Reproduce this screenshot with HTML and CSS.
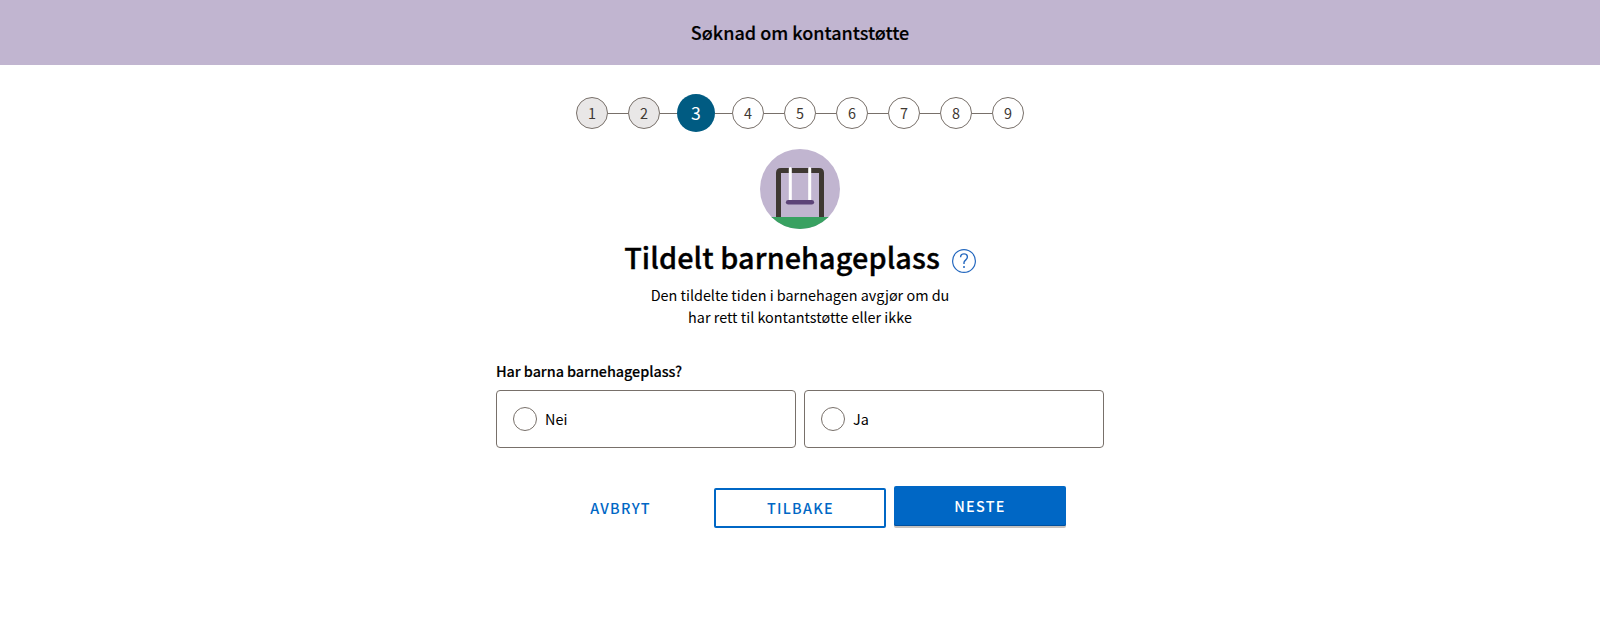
FILE: index.html
```html
<!DOCTYPE html>
<html lang="nb">
<head>
<meta charset="utf-8">
<title>Søknad om kontantstøtte</title>
<link rel="stylesheet" href="styles.css">
</head>
<body>
<header class="banner"><span class="banner-title">Søknad om kontantstøtte</span></header>
<main class="page">
  <ol class="steps">
    <li class="step done">1</li>
    <li class="step done">2</li>
    <li class="step active">3</li>
    <li class="step">4</li>
    <li class="step">5</li>
    <li class="step">6</li>
    <li class="step">7</li>
    <li class="step">8</li>
    <li class="step">9</li>
  </ol>
  <svg class="illustration" width="80" height="80" viewBox="0 0 80 80" aria-hidden="true">
    <clipPath id="disc"><circle cx="40" cy="40" r="40"/></clipPath>
    <circle cx="40" cy="40" r="40" fill="#c1b5d0"/>
    <path d="M18.500 69V24q0-2.500 2.500-2.500h38q2.500 0 2.500 2.500v45" fill="none" stroke="#3e3832" stroke-width="5"/>
    <path d="M30.300 19.500v33M49.700 19.500v33" stroke="#fff" stroke-width="3" stroke-linecap="round"/>
    <path d="M28.200 53.300h23.600" stroke="#5c4378" stroke-width="4.600" stroke-linecap="round"/>
    <rect y="68" width="80" height="12" fill="#38a161" clip-path="url(#disc)"/>
  </svg>
  <div class="heading-row">
    <h1 class="heading">Tildelt barnehageplass</h1>
    <svg class="help" width="24" height="24" viewBox="0 0 24 24" fill="none" stroke="#2468bf" stroke-width="1.200" aria-label="Hjelp">
      <circle cx="12" cy="12" r="11.400"/>
      <path stroke-width="1.400" d="M8.600 8.300C8.600 6.200 10 4.900 12 4.900s3.400 1.300 3.400 3.200c0 2.900-3.400 3.100-3.400 5.500v1.500"/>
      <circle cx="12" cy="17.900" r="1" fill="#2468bf" stroke="none"/>
    </svg>
  </div>
  <p class="intro">Den tildelte tiden i barnehagen avgjør om du<br>har rett til kontantstøtte eller ikke</p>
  <section class="question">
    <div class="legend">Har barna barnehageplass?</div>
    <div class="options">
      <label class="option"><span class="radio"></span><span class="option-text">Nei</span></label>
      <label class="option"><span class="radio"></span><span class="option-text">Ja</span></label>
    </div>
  </section>
  <div class="actions">
    <button class="button flat">AVBRYT</button>
    <button class="button outline">TILBAKE</button>
    <button class="button primary">NESTE</button>
  </div>
</main>
</body>
</html>
```
FILE: styles.css
```css
* { box-sizing: border-box; }
body {
  margin: 0;
  background: #fff;
  color: #000;
  font-family: "Noto Sans CJK JP", "Noto Sans", sans-serif;
  font-size: 14.4px;
  line-height: 22px;
}
.banner {
  height: 65px;
  padding-bottom: 2px;
  background: #c1b5d0;
  display: flex;
  align-items: center;
  justify-content: center;
  font-size: 18px;
  font-weight: 500;
  -webkit-text-stroke: 0.15px currentColor;
}
.page { display: flex; flex-direction: column; align-items: center; }
.steps {
  display: flex;
  align-items: center;
  height: 38px;
  margin: 29px 0 0;
  padding: 0;
  list-style: none;
}
.step {
  position: relative;
  width: 32px;
  height: 32px;
  margin-right: 20px;
  border: 1px solid #78706a;
  border-radius: 50%;
  display: flex;
  align-items: center;
  justify-content: center;
  color: #3e3832;
}
.step::after {
  content: "";
  position: absolute;
  left: 31px;
  top: 15px;
  width: 20px;
  height: 1px;
  background: #78706a;
}
.step:last-child { margin-right: 0; }
.step:last-child::after { display: none; }
.done { background: #e9e7e7; }
.active {
  width: 38px;
  height: 38px;
  margin: 0 17px 0 -3px;
  border: 0;
  background: #005b82;
  color: #fff;
  font-size: 17.6px;
}
.active::after { left: 38px; top: 19px; width: 17px; }
.illustration { display: block; margin-top: 17px; }
.heading-row { display: flex; gap: 12px; height: 52px; margin-top: 2px; }
.heading {
  margin: 0;
  font-size: 28.8px;
  font-weight: 500;
  line-height: 52px;
  letter-spacing: 0.1px;
  -webkit-text-stroke: 0.35px currentColor;
}
.help { margin-top: 18px; }
.intro { margin: 0; text-align: center; padding-top: 1px; }
.question { width: 608px; margin-top: 32px; }
.legend { font-weight: 500; letter-spacing: -0.05px; -webkit-text-stroke: 0.15px currentColor; }
.options { display: flex; gap: 8px; margin-top: 8px; }
.option {
  flex: 1;
  height: 58px;
  display: flex;
  align-items: center;
  gap: 8px;
  padding: 0 16px;
  border: 1px solid #78706a;
  border-radius: 4px;
}
.radio { width: 24px; height: 24px; border: 1px solid #78706a; border-radius: 50%; }
.actions { display: flex; gap: 8px; margin-top: 40px; }
.button {
  width: 172px;
  height: 40px;
  padding: 0;
  border: 2px solid transparent;
  border-radius: 2px;
  background: transparent;
  color: #0067c5;
  font: 500 14.4px/22px "Noto Sans CJK JP", "Noto Sans", sans-serif;
  letter-spacing: 1.3px;
}
.flat { padding-left: 1px; }
.outline { border-color: #0067c5; padding-left: 1px; }
.primary {
  margin-top: -2px;
  border: 0;
  background: #0067c5;
  color: #fff;
  box-shadow: inset 0 -1px #00509e, 0 2px #c6c2bf;
}
```
